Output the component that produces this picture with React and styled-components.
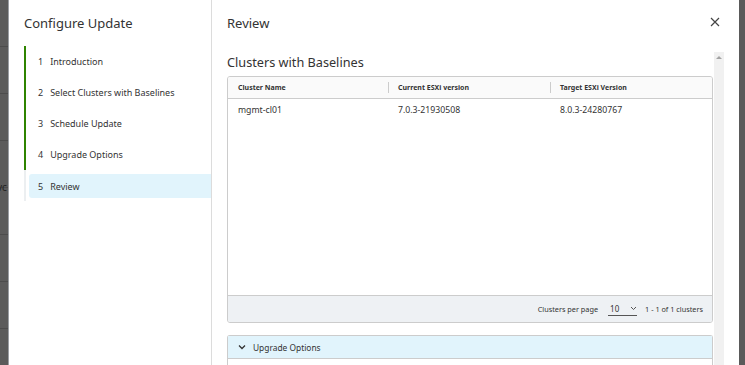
import React from "react";
import styled, { createGlobalStyle } from "styled-components";

const Global = createGlobalStyle`
  html, body { margin: 0; padding: 0; }
  body {
    background: #5a5a5a;
    font-family: "Noto Sans", "Open Sans", sans-serif;
    color: #333;
    overflow: hidden;
  }
`;

const Screen = styled.div`
  display: flex;
  height: 365px;
  width: 745px;
  overflow: hidden;
`;

const Backdrop = styled.div`
  width: 8px;
  flex: none;
  background: repeating-linear-gradient(
    to bottom,
    #5b5b5b 0px,
    #5b5b5b 46px,
    #4c4c4c 46px,
    #4c4c4c 47px
  );
  position: relative;
  overflow: hidden;
`;

const PeekText = styled.span`
  position: absolute;
  top: 180px;
  left: -3px;
  font-size: 10px;
  color: #222;
`;

const Modal = styled.div`
  flex: none;
  width: 730px;
  background: #fff;
  display: flex;
  border-left: 1px solid #9a9ea3;
`;

const Sidebar = styled.nav`
  width: 203px;
  flex: none;
  border-right: 1px solid #dcdcdc;
  padding: 12px 0 0 15px;
  box-sizing: border-box;
`;

const SideTitle = styled.h2`
  margin: 0;
  font-size: 13px;
  font-weight: 400;
  line-height: 22px;
  color: #333;
`;

const Steps = styled.ol`
  list-style: none;
  margin: 12px 0 0;
  padding: 0;
`;

const Step = styled.li`
  height: 31px;
  box-sizing: border-box;
  border-left: 2px solid ${(p) => (p.$done ? "#2f8400" : "#eceff1")};
  padding-left: 3px;
  padding-top: ${(p) => (p.$done ? "0" : "4px")};
  padding-bottom: ${(p) => (p.$done ? "0" : "3px")};
  display: flex;
  align-items: ${(p) => (p.$done ? "center" : "stretch")};
`;

const StepLabel = styled.div`
  flex: 1;
  display: flex;
  align-items: center;
  gap: 7px;
  padding-left: 9px;
  font-size: 9px;
  color: #333;
  background: ${(p) => (p.$active ? "#e1f4fc" : "transparent")};
  border-radius: 3px 0 0 3px;
`;

const Content = styled.section`
  flex: 1;
  display: flex;
  flex-direction: column;
  min-width: 0;
`;

const Header = styled.header`
  display: flex;
  align-items: center;
  justify-content: space-between;
  padding: 12px 16px 0 15px;
  height: 22px;
`;

const HeaderTitle = styled.h1`
  margin: 0;
  font-size: 13px;
  font-weight: 400;
  color: #333;
`;

const Close = styled.button`
  border: 0;
  background: none;
  padding: 0;
  width: 14px;
  height: 14px;
  display: flex;
  color: #444;
`;

const BodyRow = styled.div`
  flex: 1;
  display: flex;
  padding: 18px 15px 0 15px;
  min-height: 0;
`;

const Scroller = styled.div`
  flex: 1;
  min-width: 0;
  padding-right: 1px;
`;

const Track = styled.div`
  width: 10px;
  flex: none;
  background: #f1f1f1;
  display: flex;
  justify-content: center;
  padding-top: 4px;
  box-sizing: border-box;
`;

const Arrow = styled.div`
  width: 0;
  height: 0;
  border-left: 3px solid transparent;
  border-right: 3px solid transparent;
  border-bottom: 3px solid #a3a3a3;
`;

const SectionTitle = styled.h3`
  margin: 0;
  font-size: 12.7px;
  font-weight: 400;
  line-height: 20px;
  color: #333;
`;

const Grid = styled.div`
  margin-top: 4px;
  border: 1px solid #ccc;
  border-radius: 3px;
  height: 247px;
  box-sizing: border-box;
  display: flex;
  flex-direction: column;
  overflow: hidden;
`;

const GridHeader = styled.div`
  display: grid;
  grid-template-columns: 160px 162px 1fr;
  height: 21px;
  background: #fafafa;
  border-bottom: 1px solid #ccc;
`;

const HeadCell = styled.div`
  font-size: 7px;
  font-weight: 700;
  color: #333;
  display: flex;
  align-items: center;
  padding-left: 10px;
  position: relative;
  & + &::before {
    content: "";
    position: absolute;
    left: 0;
    top: 5px;
    bottom: 5px;
    width: 1px;
    background: #ccc;
  }
`;

const GridRow = styled.div`
  display: grid;
  grid-template-columns: 160px 162px 1fr;
  height: 21px;
`;

const Cell = styled.div`
  font-size: 8.7px;
  color: #333;
  display: flex;
  align-items: center;
  padding-left: 10px;
`;

const GridBody = styled.div`
  flex: 1;
  border-bottom: 1px solid #ccc;
`;

const Footer = styled.div`
  height: 26px;
  background: #eef1f4;
  display: flex;
  align-items: center;
  justify-content: flex-end;
  padding-right: 9px;
  font-size: 7.3px;
  color: #333;
`;

const Select = styled.div`
  margin-left: 10px;
  margin-right: 8px;
  width: 29px;
  height: 14px;
  border-bottom: 1px solid #555;
  display: flex;
  align-items: center;
  justify-content: space-between;
  padding-left: 2px;
  box-sizing: border-box;
  font-size: 8px;
`;

const Accordion = styled.div`
  margin-top: 12px;
  border: 1px solid #ccc;
  border-radius: 3px 3px 0 0;
  border-bottom: none;
  height: 40px;
`;

const AccordionHead = styled.div`
  height: 22px;
  background: #e1f4fc;
  border-bottom: 1px solid #ccc;
  display: flex;
  align-items: center;
  gap: 7px;
  padding-left: 10px;
  font-size: 8.4px;
  color: #333;
`;

const steps = ["Introduction", "Select Clusters with Baselines", "Schedule Update", "Upgrade Options", "Review"];

export default function App() {
  return (
    <>
      <Global />
      <Screen>
        <Backdrop>
          <PeekText>vc</PeekText>
        </Backdrop>
        <Modal>
          <Sidebar>
            <SideTitle>Configure Update</SideTitle>
            <Steps>
              {steps.map((s, i) => (
                <Step key={s} $done={i < 4}>
                  <StepLabel $active={i === 4}>
                    <span>{i + 1}</span>
                    <span>{s}</span>
                  </StepLabel>
                </Step>
              ))}
            </Steps>
          </Sidebar>
          <Content>
            <Header>
              <HeaderTitle>Review</HeaderTitle>
              <Close aria-label="close">
                <svg width="12" height="12" viewBox="0 0 12 12">
                  <path d="M2 2 L10 10 M10 2 L2 10" stroke="#444" strokeWidth="1.2" fill="none" />
                </svg>
              </Close>
            </Header>
            <BodyRow>
              <Scroller>
                <SectionTitle>Clusters with Baselines</SectionTitle>
                <Grid>
                  <GridHeader>
                    <HeadCell>Cluster Name</HeadCell>
                    <HeadCell>Current ESXi version</HeadCell>
                    <HeadCell>Target ESXi Version</HeadCell>
                  </GridHeader>
                  <GridBody>
                    <GridRow>
                      <Cell>mgmt-cl01</Cell>
                      <Cell>7.0.3-21930508</Cell>
                      <Cell>8.0.3-24280767</Cell>
                    </GridRow>
                  </GridBody>
                  <Footer>
                    <span>Clusters per page</span>
                    <Select>
                      <span>10</span>
                      <svg width="7" height="5" viewBox="0 0 7 5">
                        <path d="M1 1 L3.5 3.5 L6 1" stroke="#555" strokeWidth="1" fill="none" />
                      </svg>
                    </Select>
                    <span>1 - 1 of 1 clusters</span>
                  </Footer>
                </Grid>
                <Accordion>
                  <AccordionHead>
                    <svg width="8" height="6" viewBox="0 0 8 6">
                      <path d="M1 1.5 L4 4.5 L7 1.5" stroke="#333" strokeWidth="1.3" fill="none" />
                    </svg>
                    <span>Upgrade Options</span>
                  </AccordionHead>
                </Accordion>
              </Scroller>
              <Track>
                <Arrow />
              </Track>
            </BodyRow>
          </Content>
        </Modal>
      </Screen>
    </>
  );
}
